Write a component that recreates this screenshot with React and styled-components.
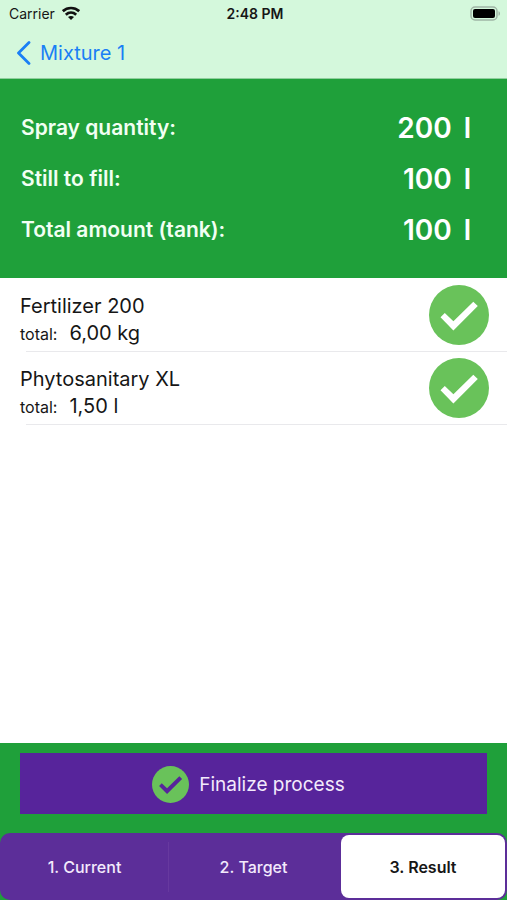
import React, { useState } from 'react'
import styled, { createGlobalStyle } from 'styled-components'

const summary = [
  { label: 'Spray quantity:', amount: '200', unit: 'l' },
  { label: 'Still to fill:', amount: '100', unit: 'l' },
  { label: 'Total amount (tank):', amount: '100', unit: 'l' },
]

const products = [
  { name: 'Fertilizer 200', total: '6,00 kg' },
  { name: 'Phytosanitary XL', total: '1,50 l' },
]

const steps = ['1. Current', '2. Target', '3. Result']

const CheckCircle = ({ size, mark }) => (
  <CheckSvg width={size} height={size} viewBox="0 0 60 60" aria-hidden="true">
    <circle cx="30" cy="30" r="30" fill="#69c25a" />
    <path d="M11.5 32.3 15.8 27.9 24.4 36.2 44.3 16.7 48.8 20.9 24.4 45.4Z" fill={mark} />
  </CheckSvg>
)

const WifiIcon = () => (
  <svg width="18" height="14" viewBox="0 0 18 14" aria-hidden="true">
    <g fill="none" stroke="#111" strokeWidth="2.7">
      <path d="M.8 5.2C5.5 .9 12.5 .9 17.2 5.2" />
      <path d="M3.8 8.7C6.9 5.9 11.1 5.9 14.2 8.700" />
    </g>
    <path d="M9 13.9 6 11C7.700 9.500 10.300 9.500 12 11Z" fill="#111" />
  </svg>
)

const BatteryIcon = () => (
  <svg width="31" height="15" viewBox="0 0 31 15" aria-hidden="true">
    <rect x="1" y="1" width="26" height="13" rx="4" fill="none" stroke="#9fb5a5" strokeWidth="1.5" />
    <rect x="3" y="3" width="22" height="9" rx="2" fill="#000" />
    <path d="M28.5 5.2c2 .6 2 4 0 4.6z" fill="#9fb5a5" />
  </svg>
)

const App = () => {

  const [active, setActive] = useState(2);

  return (
    <Screen>
      <GlobalStyle />
      <Header>
        <StatusBar>
          <Carrier>Carrier <WifiIcon /></Carrier>
          <Time>2:48 PM</Time>
          <Battery><BatteryIcon /></Battery>
        </StatusBar>
        <Back href="#mixture">
          <svg width="15" height="24" viewBox="0 0 15 24" aria-hidden="true">
            <path d="M13 1.5 2.5 12 13 22.5" fill="none" stroke="#1a7ff5" strokeWidth="2.8" strokeLinecap="round" strokeLinejoin="round" />
          </svg>
          Mixture 1
        </Back>
      </Header>

      <Summary>
        {summary.map((item) => (
          <SummaryRow key={item.label}>
            <dt>{item.label}</dt>
            <Amount>{item.amount}<span>{item.unit}</span></Amount>
          </SummaryRow>
        ))}
      </Summary>

      <List>
        {products.map((product) => (
          <li key={product.name}>
            <Product>
              <ProductText>
                <Name>{product.name}</Name>
                <Total><small>total:</small>{product.total}</Total>
              </ProductText>
              <CheckCircle size={60} mark="#fff" />
            </Product>
            <Separator />
          </li>
        ))}
      </List>

      <Footer>
        <Finalize type="button">
          <CheckCircle size={37} mark="#57249b" />
          Finalize process
        </Finalize>
        <Tabs>
          {steps.map((step, i) => (
            <Tab
              key={step}
              type="button"
              $active={active === i}
              $divided={i < steps.length - 1 && active !== i && active !== i + 1}
              aria-pressed={active === i}
              onClick={() => setActive(i)}
            >
              {step}
            </Tab>
          ))}
        </Tabs>
      </Footer>
    </Screen>
  )
}

const GlobalStyle = createGlobalStyle`
  * {
    box-sizing: border-box;
  }
  body {
    margin: 0;
    font-family: Inter, "Liberation Sans", sans-serif;
    color: #161616;
    background-color: white;
  }
  button {
    font-family: inherit;
    border: none;
    cursor: pointer;
  }
`

const Screen = styled.div`
  min-height: 100vh;
  display: flex;
  flex-direction: column;
`

const Header = styled.header`
  background-color: #d4f8dc;
  border-bottom: 1px solid #8fcf9d;
`

const StatusBar = styled.div`
  height: 26px;
  padding: 0 6px 0 9px;
  display: grid;
  grid-template-columns: 1fr auto 1fr;
  align-items: center;
  font-size: 14px;
`

const Carrier = styled.span`
  display: flex;
  align-items: center;
  gap: 7px;
`

const Time = styled.span`
  font-weight: 600;
`

const Battery = styled.span`
  display: flex;
  justify-content: flex-end;
`

const Back = styled.a`
  width: fit-content;
  height: 52px;
  padding: 1px 16px 0;
  display: flex;
  align-items: center;
  gap: 9px;
  font-size: 20px;
  color: #1a7ff5;
  text-decoration: none;
`

const Summary = styled.dl`
  margin: 0;
  padding: 23px 36px 23px 21px;
  background-color: #1fa03a;
  color: #f1fff3;
`

const SummaryRow = styled.div`
  height: 51px;
  display: flex;
  align-items: center;
  justify-content: space-between;
  font-size: 21px;
  font-weight: 600;
`

const Amount = styled.dd`
  margin: 0;
  display: flex;
  gap: 12px;
  font-size: 28px;
  color: white;
`

const List = styled.ul`
  flex: 1;
  margin: 0;
  padding: 1px 0 0;
  list-style: none;
`

const Product = styled.div`
  padding: 6px 18px 6px 20px;
  display: flex;
  align-items: center;
  justify-content: space-between;
`

const ProductText = styled.div`
  align-self: flex-end;
`

const Name = styled.div`
  font-size: 20px;
  line-height: 32px;
`

const Total = styled.div`
  display: flex;
  align-items: baseline;
  gap: 12px;
  font-size: 20px;
  line-height: 22px;
  small{
    font-size: 16px;
  }
`

const Separator = styled.hr`
  height: 1px;
  margin: 0 0 0 26px;
  border: none;
  background-color: #e9e9ec;
`

const CheckSvg = styled.svg`
  flex: none;
`

const Footer = styled.footer`
  padding-top: 10px;
  background-color: #1fa03a;
`

const Finalize = styled.button`
  width: calc(100% - 40px);
  height: 61px;
  margin: 0 20px 19px;
  padding: 1px 10px 0 0;
  display: flex;
  align-items: center;
  justify-content: center;
  gap: 10px;
  font-size: 19px;
  color: #f3eafc;
  background-color: #57249b;
`

const Tabs = styled.div`
  height: 67px;
  display: grid;
  grid-template-columns: repeat(3, 1fr);
  border-radius: 10px;
  background-color: #5c2e99;
`

const Tab = styled.button`
  margin: ${(props) => (props.$active ? '2px 2px 2px 3px' : '0')};
  padding: 0;
  font-size: 16px;
  font-weight: ${(props) => (props.$active ? 600 : 500)};
  color: ${(props) => (props.$active ? '#161616' : '#f3eafc')};
  background: ${(props) => (props.$divided
    ? 'linear-gradient(#67399f, #67399f) right center / 1px 50px no-repeat'
    : props.$active ? 'white' : 'none')};
  border-radius: ${(props) => (props.$active ? '8px' : '0')};
`

export default App
